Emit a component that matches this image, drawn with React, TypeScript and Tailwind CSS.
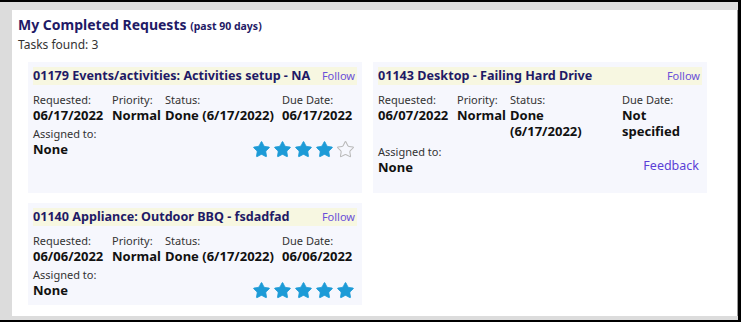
import { Star } from "lucide-react";

type Req = {
  id: string;
  title: string;
  requested: string;
  priority: string;
  status: string;
  due: string;
  assigned: string;
  rating?: number;
  cols: string;
  narrowStatus?: boolean;
};

const requests: Req[] = [
  {
    id: "01179",
    title: "Events/activities: Activities setup - NA",
    requested: "06/17/2022",
    priority: "Normal",
    status: "Done (6/17/2022)",
    due: "06/17/2022",
    assigned: "None",
    rating: 4,
    cols: "grid-cols-[79px_53px_117px_1fr]",
  },
  {
    id: "01143",
    title: "Desktop - Failing Hard Drive",
    requested: "06/07/2022",
    priority: "Normal",
    status: "Done (6/17/2022)",
    due: "Not specified",
    assigned: "None",
    cols: "grid-cols-[79px_53px_112px_1fr]",
    narrowStatus: true,
  },
  {
    id: "01140",
    title: "Appliance: Outdoor BBQ - fsdadfad",
    requested: "06/06/2022",
    priority: "Normal",
    status: "Done (6/17/2022)",
    due: "06/06/2022",
    assigned: "None",
    rating: 5,
    cols: "grid-cols-[79px_53px_117px_1fr]",
  },
];

const Stars = ({ value }: { value: number }) => (
  <div className="flex gap-[2px]">
    {[1, 2, 3, 4, 5].map((n) =>
      n <= value ? (
        <Star key={n} size={19} className="text-[#1d9bd7]" fill="#1d9bd7" strokeWidth={1} />
      ) : (
        <Star key={n} size={19} className="text-[#b9b9b9]" fill="none" strokeWidth={1.3} />
      )
    )}
  </div>
);

const Field = ({
  label,
  value,
  narrow = false,
}: {
  label: string;
  value: string;
  narrow?: boolean;
}) => (
  <div>
    <p className="text-[11px] leading-[15px] text-[#333]">{label}</p>
    <p
      className={`text-[13px] leading-[16px] font-bold text-[#111] ${
        narrow ? "w-[95px]" : ""
      }`}
    >
      {value}
    </p>
  </div>
);

const RequestCard = ({ r }: { r: Req }) => (
  <div className="bg-[#f6f7fd] px-[5px] pt-[5px]">
    <div className="h-[18px] bg-[#f7f7e1] flex items-center justify-between pr-[2px]">
      <span className="text-[12.6px] font-bold text-[#1f1a66]">
        {r.id} {r.title}
      </span>
      <span className="text-[11px] text-[#6a4fd8]">Follow</span>
    </div>
    <div className={`grid ${r.cols} mt-[7px]`}>
      <Field label="Requested:" value={r.requested} />
      <Field label="Priority:" value={r.priority} />
      <Field label="Status:" value={r.status} narrow={r.narrowStatus} />
      <Field label="Due Date:" value={r.due} />
    </div>
    <div
      className={`flex items-end justify-between ${
        r.narrowStatus ? "mt-[5px]" : "mt-[3px]"
      }`}
    >
      <Field label="Assigned to:" value={r.assigned} />
      {r.rating ? (
        <div className="mr-[2px] mb-[-2px]">
          <Stars value={r.rating} />
        </div>
      ) : (
        <span className="text-[12.5px] leading-[16px] text-[#5b3fd6] mr-[3px] mb-[1px]">
          Feedback
        </span>
      )}
    </div>
  </div>
);

const App = () => {
  return (
    <div
      className="w-[741px] h-[322px] bg-[#dcdcdc] border-t-2 border-b-2 border-r-[3px] border-black pl-[12px] pt-[8px] pb-[4px] flex"
      style={{ fontFamily: '"Noto Sans", "Open Sans", sans-serif' }}
    >
      <div className="flex-1 bg-white border-r border-[#9a9a9a] pl-[6px] pt-[4px]">
        <h1 className="text-[14px] leading-[22px] font-bold text-[#1f1a66]">
          My Completed Requests <span className="text-[10.5px]">(past 90 days)</span>
        </h1>
        <p className="text-[12px] leading-[16px] text-[#333]">Tasks found: 3</p>
        <div className="ml-[10px] mt-[9px] grid grid-cols-[334px_334px] grid-rows-[131px_102px] gap-x-[11px] gap-y-[10px]">
          {requests.map((r) => (
            <RequestCard key={r.id} r={r} />
          ))}
        </div>
      </div>
    </div>
  );
};

export default App;
